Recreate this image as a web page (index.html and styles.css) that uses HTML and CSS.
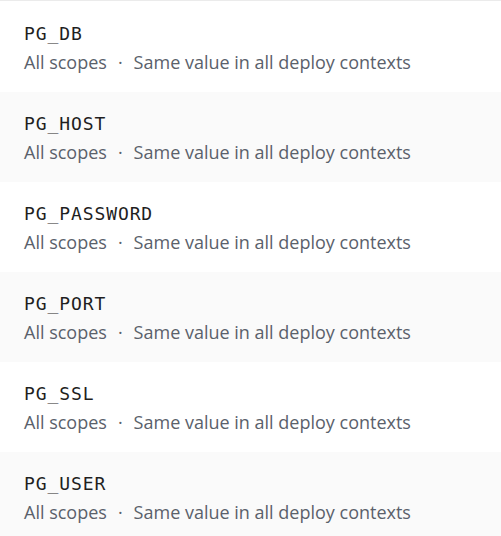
FILE: index.html
```
<!DOCTYPE html>
<html>
<head>
<meta charset="utf-8">
<link rel="stylesheet" href="styles.css">
</head>
<body>
<ul class="vars">
  <li class="var"><div class="name">PG_DB</div><div class="meta"><span>All scopes</span><span class="sep">·</span><span>Same value in all deploy contexts</span></div></li>
  <li class="var"><div class="name">PG_HOST</div><div class="meta"><span>All scopes</span><span class="sep">·</span><span>Same value in all deploy contexts</span></div></li>
  <li class="var"><div class="name">PG_PASSWORD</div><div class="meta"><span>All scopes</span><span class="sep">·</span><span>Same value in all deploy contexts</span></div></li>
  <li class="var"><div class="name">PG_PORT</div><div class="meta"><span>All scopes</span><span class="sep">·</span><span>Same value in all deploy contexts</span></div></li>
  <li class="var"><div class="name">PG_SSL</div><div class="meta"><span>All scopes</span><span class="sep">·</span><span>Same value in all deploy contexts</span></div></li>
  <li class="var"><div class="name">PG_USER</div><div class="meta"><span>All scopes</span><span class="sep">·</span><span>Same value in all deploy contexts</span></div></li>
</ul>
</body>
</html>
```
FILE: styles.css
```
html, body { margin: 0; padding: 0; background: #fff; }
.vars {
  list-style: none;
  margin: 0;
  padding: 1px 0 0;
  border-top: 1px solid #ebebeb;
}
.var {
  height: 90px;
  box-sizing: border-box;
  padding: 20px 24px 0;
  background: #fff;
}
.var:nth-child(even) { background: #fafafa; }
.name {
  font-family: "DejaVu Sans Mono", monospace;
  font-size: 18px;
  letter-spacing: 0.9px;
  line-height: 24px;
  color: #1f1f1f;
}
.meta {
  font-family: "Open Sans", sans-serif;
  font-size: 18px;
  line-height: 28px;
  color: #5a616b;
  margin-top: 2px;
}
.sep { margin: 0 11px; }
```
